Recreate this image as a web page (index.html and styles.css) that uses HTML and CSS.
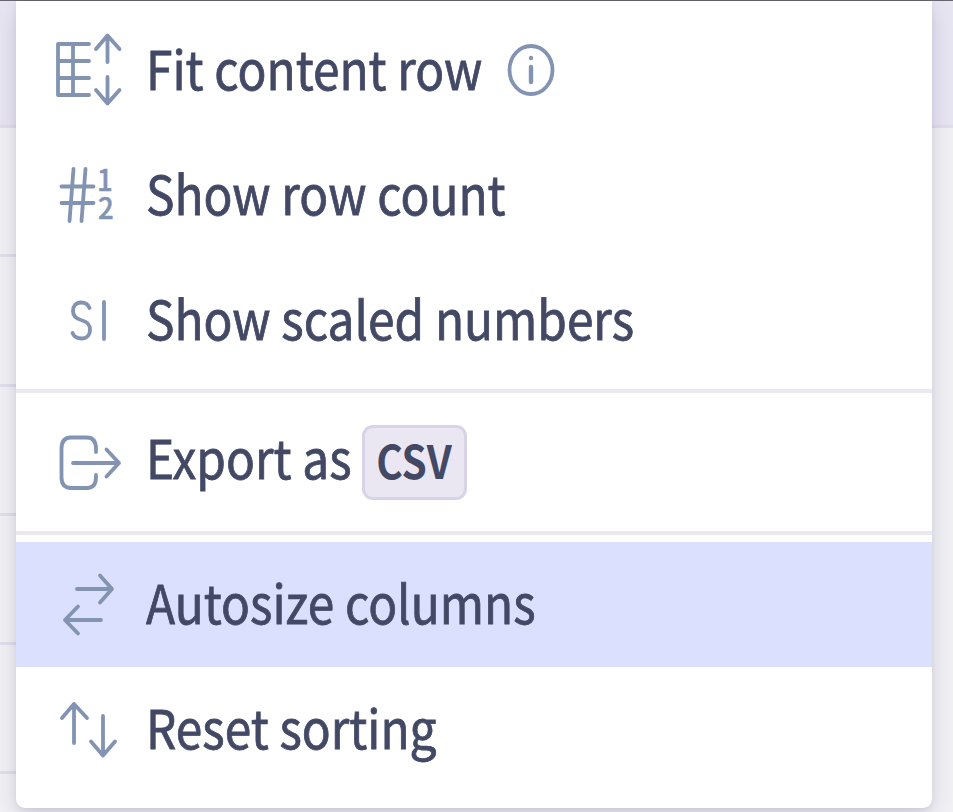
FILE: index.html
```html
<!DOCTYPE html>
<html lang="en">
<head>
  <meta charset="UTF-8" />
  <meta name="viewport" content="width=device-width, initial-scale=1.0"/>
  <title>Table menu</title>
  <link rel="stylesheet" href="styles.css">
</head>
<body>

  <div class="table">
    <div class="table-head"></div>
    <div class="table-row"></div>
    <div class="table-row"></div>
    <div class="table-row"></div>
    <div class="table-row"></div>
    <div class="table-row"></div>
  </div>

  <div class="menu">
    <div class="item">
      <svg class="icon" viewBox="0 0 76 80">
        <path d="M37 13H6V64H37M6 30H37M6 47H37M21 13V64"/>
        <path d="M55.500 31V5M44 18L55.500 4.500L67.500 18M55.500 46V71M44 59L55.500 72.500L67.500 59"/>
      </svg>
      <span class="label">Fit content row</span>
      <svg class="info" viewBox="0 0 48 52">
        <ellipse cx="24" cy="26" rx="21.500" ry="24"/>
        <path class="stem" d="M24 23V38"/>
        <circle class="dot" cx="24" cy="14" r="2.200"/>
      </svg>
    </div>
    <div class="item">
      <svg class="icon" viewBox="0 0 76 80">
        <path d="M21.500 13L17.500 65M33.500 13L29.500 65M9.500 30.500H41.500M9.500 47H41.500"/>
        <text transform="scale(.92 1)"><tspan x="49" y="35">1</tspan><tspan x="50" y="63.500">2</tspan></text>
      </svg>
      <span class="label">Show row count</span>
    </div>
    <div class="item">
      <svg class="icon" viewBox="0 0 76 80">
        <path d="M37.500 27C36 23 33 21.500 29 21.500C24 21.500 21 25 21 30C21 35 24 37.500 29 39C35 40.500 38 43.500 38 48.500C38 54 34.500 57.500 29.500 57.500C25 57.500 22 55.500 20.500 52M52 21V58"/>
      </svg>
      <span class="label">Show scaled numbers</span>
    </div>
    <hr class="divider">
    <div class="item export">
      <svg class="icon" viewBox="0 0 76 80">
        <path d="M44 29V26Q44 14.500 35 14.500H19Q9.500 14.500 9.500 26V54Q9.500 65 19 65H35Q44 65 44 54V52"/>
        <path d="M21 40H67M54.500 26.500L67 40L54.500 53.500"/>
      </svg>
      <span class="label">Export as</span>
      <span class="badge"><span class="badge-text">CSV</span></span>
    </div>
    <hr class="divider">
    <div class="item active">
      <svg class="icon" viewBox="0 0 76 80">
        <path d="M25 24H60M48 10.500L60 24L48 37.500"/>
        <path d="M49 55H13M26 41.500L13 55L26 68.500"/>
      </svg>
      <span class="label">Autosize columns</span>
    </div>
    <div class="item">
      <svg class="icon" viewBox="0 0 76 80">
        <path d="M22 53V14M10 28L22 14L35 28"/>
        <path d="M51 26V65M39 51.500L51 65.500L63 51.500"/>
      </svg>
      <span class="label">Reset sorting</span>
    </div>
  </div>

</body>
</html>
```

FILE: styles.css
```css
* {
  box-sizing: border-box;
}

body {
  margin: 0;
  height: 812px;
  overflow: hidden;
  position: relative;
  background-color: #f2f2f5;
  color: #434965;
  font-family: "Noto Sans CJK SC", "Open Sans", sans-serif;
}

.table {
  border-top: 1px solid #67656d;
}

.table-head {
  height: 127px;
  background-color: #e9e6f3;
  border-bottom: 3px solid #e2deec;
}

.table-row {
  height: 129.3px;
  margin-right: 40px;
  border-bottom: 3px solid #e2dfed;
}

.menu {
  position: absolute;
  top: 1px;
  left: 16px;
  width: 916px;
  height: 807px;
  padding-top: 7px;
  background-color: #fff;
  border-radius: 0 0 9px 9px;
  box-shadow: 0 2px 5px rgba(67, 60, 110, 0.08), 0 8px 24px rgba(67, 60, 110, 0.2);
}

.item {
  display: flex;
  align-items: center;
  height: 125px;
  padding-left: 36px;
}

.item.active {
  background-color: #dce0ff;
}

.icon {
  width: 76px;
  height: 80px;
  flex-shrink: 0;
}

.icon,
.info {
  fill: none;
  stroke: #8294b2;
  stroke-width: 3.8;
  stroke-linecap: round;
  stroke-linejoin: round;
}

.icon text {
  font-size: 30px;
  font-weight: 500;
  fill: #8294b2;
  stroke: #8294b2;
  stroke-width: 0.5;
}

.label {
  margin-left: 18px;
  padding-bottom: 7px;
  font-size: 53px;
  line-height: 60px;
  white-space: nowrap;
  -webkit-text-stroke: 0.8px #434965;
  transform: scaleX(0.902);
  transform-origin: left;
}

.export .label {
  padding-bottom: 14px;
}

.info {
  width: 48px;
  height: 52px;
  margin-left: -12px;
  margin-bottom: 2px;
}

.info .stem {
  stroke-width: 4.4;
}

.info .dot {
  fill: #8294b2;
  stroke: none;
}

.badge {
  display: flex;
  align-items: center;
  justify-content: center;
  width: 105px;
  height: 75px;
  margin-left: -12px;
  background-color: #eae7f3;
  border: 3px solid #d8d3e7;
  border-radius: 11px;
}

.badge-text {
  padding-bottom: 8px;
  font-size: 46px;
  font-weight: 700;
  line-height: 60px;
  transform: scaleX(0.88);
}

.divider {
  height: 4px;
  margin: 6px 0 7px;
  border: none;
  background-color: #ebe8f3;
}
```
